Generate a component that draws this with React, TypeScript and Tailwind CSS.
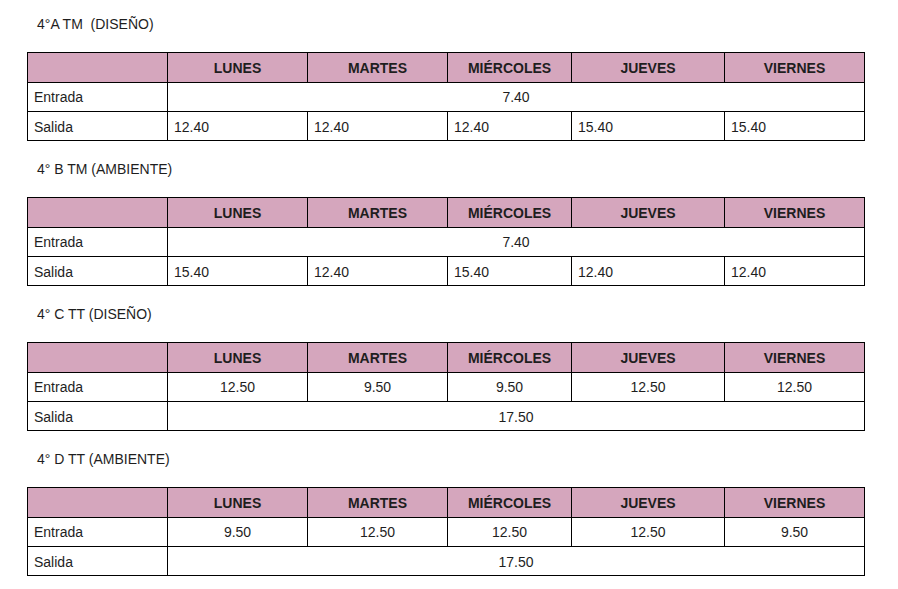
import React from "react";

type Section = {
  title: string;
  entrada: string[] | string;
  salida: string[] | string;
};

const days = ["LUNES", "MARTES", "MIÉRCOLES", "JUEVES", "VIERNES"];
const widths = [140, 140, 140, 124, 153, 140];

const sections: Section[] = [
  { title: "4°A TM  (DISEÑO)", entrada: "7.40", salida: ["12.40", "12.40", "12.40", "15.40", "15.40"] },
  { title: "4° B TM (AMBIENTE)", entrada: "7.40", salida: ["15.40", "12.40", "15.40", "12.40", "12.40"] },
  { title: "4° C TT (DISEÑO)", entrada: ["12.50", "9.50", "9.50", "12.50", "12.50"], salida: "17.50" },
  { title: "4° D TT (AMBIENTE)", entrada: ["9.50", "12.50", "12.50", "12.50", "9.50"], salida: "17.50" },
];

function Row({
  label,
  value,
  centered,
  shift,
}: {
  label: string;
  value: string[] | string;
  centered: boolean;
  shift: boolean;
}) {
  const pt = shift ? "pt-[2px]" : "";
  return (
    <tr className="h-[29px]">
      <td className={`border border-black px-[6px] align-middle ${pt}`}>{label}</td>
      {typeof value === "string" ? (
        <td colSpan={5} className={`border border-black text-center align-middle ${pt}`}>
          {value}
        </td>
      ) : (
        value.map((v, i) => (
          <td
            key={i}
            className={`border border-black align-middle ${pt} ${centered ? "text-center" : "px-[6px] text-left"}`}
          >
            {v}
          </td>
        ))
      )}
    </tr>
  );
}

export default function App() {
  return (
    <div
      className="w-[898px] h-[589px] bg-white pl-[27px] pt-[14px] text-[14px] text-[#1e1e1e]"
      style={{ fontFamily: '"Liberation Sans", Arial, sans-serif' }}
    >
      {sections.map((s, idx) => (
        <div key={idx} className={idx > 0 ? "mt-[18px]" : ""}>
          <div className="h-[20px] leading-[20px] pl-[10px] whitespace-pre">{s.title}</div>
          <table className="mt-[18px] table-fixed border-collapse w-[838px]">
            <colgroup>
              {widths.map((w, i) => (
                <col key={i} style={{ width: w }} />
              ))}
            </colgroup>
            <tbody>
              <tr className="h-[30px] bg-[#d5a6bd]">
                <td className="border border-black"></td>
                {days.map((d) => (
                  <td key={d} className="border border-black text-center font-bold align-middle pt-[2px]">
                    {d}
                  </td>
                ))}
              </tr>
              <Row label="Entrada" value={s.entrada} centered={true} shift={false} />
              <Row label="Salida" value={s.salida} centered={false} shift={true} />
            </tbody>
          </table>
        </div>
      ))}
    </div>
  );
}
